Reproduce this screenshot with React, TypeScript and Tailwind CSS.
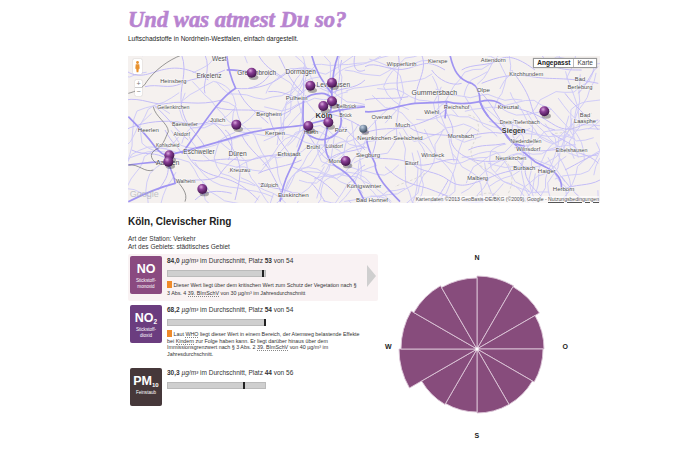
import React from "react";

const sans = "font-['Liberation_Sans',Arial,sans-serif]";

// map drawing is traced in 3x crop coordinates, so each half sits in its own scaled group
const minorLeft = [
  "M0 60 C40 90 70 70 110 60 S190 50 250 90",
  "M60 110 C100 100 130 120 170 100 S240 90 300 60",
  "M0 150 C50 140 90 170 130 160 S220 170 290 150",
  "M90 170 C130 200 150 240 190 270",
  "M0 240 C40 220 100 210 150 215 S230 230 260 210",
  "M170 15 C190 70 160 110 170 170 S210 240 240 290",
  "M240 15 C260 60 230 100 240 130",
  "M330 115 C380 120 430 110 470 80 S530 50 570 60",
  "M340 120 C360 170 400 190 430 220",
  "M270 170 C320 190 380 170 430 190 S500 170 540 155",
  "M250 210 C290 230 310 270 330 310 S350 370 330 450",
  "M200 330 C250 340 290 320 340 330 S430 300 500 320",
  "M180 300 C200 350 240 370 280 380 S350 400 400 450",
  "M280 380 C300 350 320 330 340 320",
  "M350 255 C370 300 420 330 440 370 S470 420 470 450",
  "M430 190 C440 240 470 280 500 320",
  "M400 370 C440 350 490 350 530 330",
  "M150 400 C190 380 240 400 280 380",
  "M210 450 C240 420 280 420 320 430",
  "M460 15 C480 50 490 90 535 130",
  "M400 15 C420 50 440 60 470 80",
  "M535 150 C500 140 470 120 430 125",
  "M540 240 C570 280 580 310 610 330",
  "M500 350 C550 370 600 390 640 440",
  "M650 230 C680 250 700 280 720 300",
  "M640 170 C670 180 700 160 720 170",
  "M620 130 C650 110 690 120 720 90",
  "M650 30 C640 70 650 90 630 130",
  "M690 15 C680 60 700 70 720 60",
  "M610 330 C640 300 680 310 720 290",
  "M680 380 C700 360 710 350 720 345",
  "M400 400 C440 420 480 410 520 440",
  "M560 400 C580 420 590 440 600 455",
  "M20 300 C60 320 90 300 130 330",
  "M100 420 C130 380 130 370 130 340",
  "M610 190 C650 200 680 210 715 235",
  "M300 240 C320 250 330 290 310 330",
  "M120 240 C140 280 160 290 170 310",
  "M440 60 C430 90 400 110 370 115",
  "M540 60 C530 90 540 120 535 150",
];

const majorLeft = [
  "M305 15 C310 60 320 90 332 115 C290 140 250 200 215 250 C195 275 185 295 170 310",
  "M10 200 C40 230 60 250 90 290 C110 315 130 325 150 310 C220 295 300 270 350 255 C410 235 470 235 540 225 L600 210",
  "M535 150 C535 190 530 220 540 245 C560 265 590 275 610 265 C645 255 655 220 645 185 C635 150 610 130 590 130 C565 130 545 140 535 150",
  "M560 15 C570 60 590 90 620 130 C625 170 610 210 600 270 C600 310 610 340 650 360 C690 385 700 420 720 455",
  "M540 245 C525 290 510 330 490 370 C475 400 470 430 465 455",
  "M130 335 C135 360 150 380 150 400 C110 410 50 435 10 455",
  "M10 345 C50 340 90 335 130 335",
  "M305 60 C330 58 350 62 380 68",
  "M640 15 C625 50 622 90 620 130",
  "M610 190 C650 175 690 175 720 170",
];

const minorRight = [
  "M0 50 C30 30 80 70 130 55 S190 30 240 60",
  "M100 15 C110 60 80 100 110 150",
  "M170 15 C190 60 150 100 150 160",
  "M290 60 C320 40 370 50 400 30 S470 30 510 60",
  "M350 100 C400 80 440 70 500 80 S600 80 700 100",
  "M440 60 C470 100 490 130 500 170 S530 230 570 240",
  "M530 15 C560 60 600 60 650 60",
  "M400 165 C440 170 500 180 560 220 S640 220 700 210",
  "M600 130 C630 170 660 190 700 240",
  "M0 250 C40 230 90 240 130 230 S220 200 240 180",
  "M130 230 C170 260 210 250 260 258 S360 240 410 250",
  "M240 180 C260 220 270 240 260 260 S280 320 330 330",
  "M0 320 C50 330 90 320 140 340 S230 320 280 330",
  "M140 340 C170 370 210 360 250 390 S320 400 370 385",
  "M250 390 C240 410 220 440 210 455",
  "M60 350 C100 390 130 400 170 410 S240 440 290 450",
  "M330 330 C370 340 420 330 440 326 S470 350 480 356",
  "M370 385 C400 370 440 360 480 356",
  "M490 300 C540 310 580 290 620 302 S680 320 700 340",
  "M600 360 C640 340 670 320 700 310",
  "M590 420 C630 400 670 410 705 390",
  "M350 130 C380 160 390 190 420 230",
  "M420 280 C380 290 350 280 310 300",
  "M560 250 C590 270 620 280 640 300",
  "M480 356 C480 390 500 410 530 440",
  "M590 380 C620 420 640 440 660 455",
  "M0 150 C40 140 80 150 130 140",
  "M200 60 C220 90 260 110 290 100",
  "M640 130 C670 100 680 60 700 50",
  "M30 210 C40 260 30 290 20 320",
];

const majorRight = [
  "M255 15 C265 60 280 90 320 100 C340 110 345 130 345 155 C360 200 390 220 420 250 C440 280 480 310 510 335 C560 360 590 370 590 415",
  "M0 185 C50 190 100 165 150 160 C190 158 220 158 245 155 L240 205",
  "M245 155 C280 165 320 160 345 155 C380 145 400 155 420 170",
  "M5 265 C5 290 20 320 30 340 C30 380 70 420 105 455",
  "M345 155 C350 175 360 185 370 200",
  "M420 250 C430 270 440 280 480 290",
];

const borderRoutes = [
  "M170 15 C130 30 90 60 65 95 C55 115 30 125 10 130",
  "M85 170 C90 200 130 220 130 245 C120 265 115 290 90 300 C70 315 80 330 100 345",
  "M10 345 C40 340 60 370 85 360",
  "M150 385 C170 410 190 430 180 455",
];

const dashedRight = [
  "M310 195 C340 200 350 230 330 270 S310 330 370 360",
  "M420 330 C440 350 450 390 430 430",
  "M570 250 C620 250 640 220 680 190",
  "M180 370 C150 390 110 400 90 410",
  "M330 440 C370 420 400 430 420 455",
];

// small back roads: too many to trace, a seeded walk gives the same density
const makeBackRoads = (count: number) => {
  let seed = 7919;
  const rnd = () => {
    seed = (seed * 16807) % 2147483647;
    return seed / 2147483647;
  };
  const roads: string[] = [];
  for (let i = 0; i < count; i++) {
    let x = 128 + rnd() * 472;
    let y = 56 + rnd() * 147;
    let heading = rnd() * Math.PI * 2;
    let d = `M${x.toFixed(1)} ${y.toFixed(1)}`;
    for (let s = 0; s < 5; s++) {
      heading += (rnd() - 0.5) * 1.5;
      const cx = x + Math.cos(heading) * 9;
      const cy = y + Math.sin(heading) * 9;
      heading += (rnd() - 0.5) * 1.2;
      x = cx + Math.cos(heading) * 9;
      y = cy + Math.sin(heading) * 9;
      d += `Q${cx.toFixed(1)} ${cy.toFixed(1)} ${x.toFixed(1)} ${y.toFixed(1)}`;
    }
    roads.push(d);
  }
  return roads;
};

const backRoads = makeBackRoads(140);

type MapLabel = [string, number, number, number?, boolean?];

const labelsLeft: MapLabel[] = [
  ["West", 283, 33, 27],
  ["Grevenbroich", 395, 74, 27],
  ["Dormagen", 527, 71, 27],
  ["Erkelenz", 252, 84, 27],
  ["Heinsberg", 145, 98, 24],
  ["Leverkusen", 625, 112, 27],
  ["Pulheim", 515, 150, 25],
  ["Geilenkirchen", 145, 177, 22],
  ["Bellbrück", 665, 174, 20],
  ["Bergheim", 432, 197, 25],
  ["Köln", 597, 204, 32, true],
  ["Brück", 662, 200, 20],
  ["Baesweiler", 180, 229, 22],
  ["Jülich", 278, 217, 25],
  ["Heerlen", 70, 245, 25],
  ["Porz", 648, 245, 25],
  ["Hürth", 558, 252, 25],
  ["Kerpen", 450, 256, 26],
  ["Alsdorf", 170, 259, 22],
  ["Kohlscheid", 128, 290, 20],
  ["Lülsdorf", 628, 295, 20],
  ["Brühl", 565, 297, 24],
  ["Eschweiler", 222, 311, 27],
  ["Düren", 338, 319, 28],
  ["Erftstadt", 492, 318, 26],
  ["Mondorf", 642, 338, 24],
  ["Aachen", 128, 344, 29],
  ["Kreuzau", 345, 365, 23],
  ["Walheim", 182, 398, 21],
  ["Zülpich", 433, 410, 23],
  ["Euskirchen", 505, 442, 26],
];

const labelsRight: MapLabel[] = [
  ["Kierspe", 218, 38, 24],
  ["Attendorn", 385, 37, 24],
  ["Wipperfürth", 110, 49, 24],
  ["Kirchhundem", 484, 78, 24],
  ["Bad", 645, 94, 24],
  ["Berleburg", 645, 117, 24],
  ["Olpe", 355, 126, 26],
  ["Gummersbach", 208, 134, 29],
  ["Reichshof", 275, 177, 24],
  ["Kreuztal", 430, 176, 24],
  ["Wiehl", 200, 193, 25],
  ["Bad", 660, 201, 24],
  ["Overath", 50, 206, 24],
  ["Dreis-Tiefenbach", 464, 221, 22],
  ["Laasphe", 660, 220, 24],
  ["Much", 113, 232, 25],
  ["Siegen", 446, 249, 30, true],
  ["Morsbach", 288, 263, 25],
  ["Niederdielfen", 483, 278, 22],
  ["Wilnsdorf", 490, 304, 24],
  ["Eibelshausen", 620, 306, 22],
  ["Windeck", 203, 321, 25],
  ["Neunkirchen", 438, 330, 23],
  ["Eitorf", 140, 345, 24],
  ["Burbach", 478, 361, 25],
  ["Haiger", 545, 369, 25],
  ["Malberg", 338, 391, 24],
  ["Herborn", 596, 422, 25],
];

// labels that straddle the two traced halves, in page coordinates
const labelsPage: MapLabel[] = [
  ["Neunkirchen-Seelscheid", 390, 140, 8.4],
  ["Siegburg", 368, 157, 8.4],
  ["Königswinter", 364, 188, 8.4],
  ["Bad Honnef", 372, 202, 8.4],
];

const pinsLeft = [
  [380, 68], [556, 107], [621, 98], [595, 168], [621, 154], [610, 217],
  [550, 228], [334, 224], [133, 316], [130, 335], [232, 417], [662, 333],
];

const MapLabels = ({ items }: { items: MapLabel[] }) => (
  <>
    {items.map(([text, x, y, size = 24, bold]) => (
      <text
        key={text + x}
        x={x}
        y={y}
        fontSize={size * 0.72}
        textAnchor="middle"
        fontFamily="Liberation Sans, Arial, sans-serif"
        fontWeight={bold ? 700 : 400}
        fill={bold ? "#333" : "#4d4d4d"}
        stroke="#fff"
        strokeOpacity="0.7"
        strokeWidth={size > 15 ? 3 : 1}
        paintOrder="stroke"
      >
        {text}
      </text>
    ))}
  </>
);

const Pin = ({ x, y, r = 15, fill = "url(#pinBall)" }: { x: number; y: number; r?: number; fill?: string }) => (
  <g>
    <ellipse cx={x + 6} cy={y + r - 1} rx={r - 1} ry={8} fill="#000" opacity="0.3" />
    <circle cx={x} cy={y} r={r} fill={fill} />
  </g>
);

const AirMap = () => (
  <div className="relative h-[147px] w-[472px] overflow-hidden bg-[#f5f1ef]">
    <svg viewBox="128 56 472 147" className="block h-[147px] w-[472px]">
      <defs>
        <radialGradient id="pinBall" cx="38%" cy="30%" r="75%">
          <stop offset="0" stopColor="#d9a6dc" />
          <stop offset="0.35" stopColor="#8a3f96" />
          <stop offset="1" stopColor="#3a1045" />
        </radialGradient>
        <radialGradient id="pinGrey" cx="38%" cy="30%" r="75%">
          <stop offset="0" stopColor="#c5d3e4" />
          <stop offset="0.45" stopColor="#7b8ea6" />
          <stop offset="1" stopColor="#3a4757" />
        </radialGradient>
      </defs>
      <g fill="none" stroke="#d0ccf8" strokeWidth="1">
        {backRoads.map((d) => <path key={d} d={d} />)}
      </g>
      <g transform="translate(125 50) scale(0.3333)" fill="none">
        <g stroke="#c3bcf7" strokeWidth="3">
          {minorLeft.map((d) => <path key={d} d={d} />)}
        </g>
        <g stroke="#a094f2" strokeWidth="5">
          {majorLeft.map((d) => <path key={d} d={d} />)}
        </g>
        <g stroke="#666" strokeWidth="2">
          {borderRoutes.map((d) => <path key={d} d={d} />)}
        </g>
        <MapLabels items={labelsLeft} />
        <text x="58" y="441" fontSize="27" fontFamily="Liberation Sans, Arial, sans-serif" textAnchor="middle" fill="#a9aeb5" opacity="0.7">Google</text>
      </g>
      <g transform="translate(365 50) scale(0.3333)" fill="none">
        <g stroke="#c3bcf7" strokeWidth="3">
          {minorRight.map((d) => <path key={d} d={d} />)}
        </g>
        <g stroke="#cfcdc8" strokeWidth="2" strokeDasharray="8 6">
          {dashedRight.map((d) => <path key={d} d={d} />)}
        </g>
        <g stroke="#a094f2" strokeWidth="5">
          {majorRight.map((d) => <path key={d} d={d} />)}
        </g>
        <MapLabels items={labelsRight} />
      </g>
      <MapLabels items={labelsPage} />
      <g transform="translate(125 50) scale(0.3333)">
        {pinsLeft.map(([x, y]) => <Pin key={`${x}-${y}`} x={x} y={y} />)}
        <Pin x={715} y={236} r={12} fill="url(#pinGrey)" />
      </g>
      <g transform="translate(365 50) scale(0.3333)">
        <Pin x={538} y={184} />
      </g>
    </svg>

    {/* pegman + zoom */}
    <div className="absolute left-[5px] top-[3px] h-[15px] w-[9px] rounded-[1px] bg-white shadow-[0_0_1px_#888]">
      <svg viewBox="0 0 10 17" className="h-[15px] w-[9px]">
        <circle cx="5" cy="4" r="1.6" fill="#e8912e" />
        <path d="M3 6h4l.5 5H6.5L6 15H4l-.5-4h-1z" fill="#e8912e" />
      </svg>
    </div>
    <div className="absolute left-[7px] top-[24px] flex h-[16px] w-[7px] flex-col rounded-[1px] bg-white text-center text-[7px] leading-[7px] text-[#777] shadow-[0_0_1px_#888]">
      <span className="h-[8px] border-b border-[#ccc]">+</span>
      <span>−</span>
    </div>

    {/* map type */}
    <div className={`absolute right-[3px] top-[2px] flex h-[10px] border border-[#999] bg-white text-[6.5px] leading-[8px] shadow-[0_0_1px_#aaa] ${sans}`}>
      <span className="border-r border-[#bbb] px-[3px] font-bold text-[#222]">Angepasst</span>
      <span className="px-[3px] text-[#444]">Karte</span>
    </div>

    <div className={`absolute bottom-[0.5px] right-[1px] bg-white/60 text-[5.1px] leading-[7px] text-[#555] ${sans}`}>
      Kartendaten ©2013 GeoBasis-DE/BKG (©2009), Google - <span className="underline">Nutzungsbedingungen</span>
    </div>
  </div>
);

const Abbr = ({ children }: { children: React.ReactNode }) => (
  <span className="border-b border-dotted border-[#888]">{children}</span>
);

const Flag = () => <span className="inline-block h-[7px] w-[5px] bg-[#ef8a2a] align-[-1px]" />;

interface StationRowProps {
  badge: React.ReactNode;
  name: React.ReactNode;
  color: string;
  value: string;
  rank: number;
  total: number;
  marker: number;
  note?: React.ReactNode;
  active?: boolean;
  height: string;
}

const StationRow = ({ badge, name, color, value, rank, total, marker, note, active, height }: StationRowProps) => (
  <div className={`relative flex gap-[5px] rounded-[2px] p-[2px] ${height} ${active ? "bg-[#f9f2f3]" : ""}`}>
    <div className={`flex h-[38px] w-[32px] shrink-0 flex-col items-center rounded-[2px] pt-[7px] text-white ${color}`}>
      <div className="text-[12.5px] font-bold leading-[13px]">{badge}</div>
      <div className="mt-[2px] text-center text-[4.6px] leading-[6px]">{name}</div>
    </div>
    <div className="flex-1">
      <div className="text-[6.5px] leading-[9px] text-[#333]">
        <b>{value}</b> <span className="italic">µg/m³</span> im Durchschnitt, Platz <b>{rank}</b> von {total}
      </div>
      <div className="relative mt-[5px] h-[7px] w-[99px] border border-[#bbb] bg-[#cfcfcf]">
        <div className="absolute top-[-1px] h-[7px] w-[1.5px] bg-[#222]" style={{ left: marker }} />
      </div>
      {note && <div className="mt-[4px] text-[5.35px] text-[#333]">{note}</div>}
    </div>
    {active && (
      <div className="absolute right-[2px] top-[11px] h-0 w-0 border-y-[11px] border-l-[9px] border-y-transparent border-l-[#cfcfcf]" />
    )}
  </div>
);

const CX = 100;
const CY = 100;
const radii = [73, 72, 67, 66, 64, 64, 63, 64, 78, 76, 73, 71];

const wedgePath = (i: number, r: number) => {
  const a0 = ((i * 30 - 90) * Math.PI) / 180;
  const a1 = (((i + 1) * 30 - 90) * Math.PI) / 180;
  return `M${CX} ${CY}L${CX + r * Math.cos(a0)} ${CY + r * Math.sin(a0)}A${r} ${r} 0 0 1 ${CX + r * Math.cos(a1)} ${CY + r * Math.sin(a1)}Z`;
};

const WindRose = () => (
  <div className="relative h-[200px] w-[200px]">
    <svg viewBox="0 0 200 200" className="block h-[200px] w-[200px]">
      {radii.map((r, i) => (
        <path key={i} d={wedgePath(i, r)} fill="#874c7c" stroke="#dcc6d8" strokeWidth="0.9" strokeLinejoin="round" />
      ))}
      <circle cx={CX} cy={CY} r="2" fill="#fff" stroke="#dcc6d8" strokeWidth="0.8" />
    </svg>
    <span className="absolute left-[97.5px] top-[5px] text-[7px] font-bold leading-[8px] text-[#222]">N</span>
    <span className="absolute left-[185.5px] top-[94px] text-[7px] font-bold leading-[8px] text-[#222]">O</span>
    <span className="absolute left-[97.5px] top-[183px] text-[7px] font-bold leading-[8px] text-[#222]">S</span>
    <span className="absolute left-[8px] top-[94px] text-[7px] font-bold leading-[8px] text-[#222]">W</span>
  </div>
);

export default function App() {
  return (
    <div className={`h-[450px] w-[700px] overflow-hidden bg-white pl-[128px] ${sans}`}>
      <h1 className="h-[33px] pt-[8px] font-['Liberation_Serif',serif] text-[22.6px] font-bold italic leading-[24px] text-[#b884d0] [-webkit-text-stroke:0.6px_#b884d0]">
        Und was atmest Du so?
      </h1>
      <p className="h-[23px] pt-[1px] text-[6.5px] leading-[9px] text-[#222]">
        Luftschadstoffe in Nordrhein-Westfalen, einfach dargestellt.
      </p>
      <AirMap />
      <h2 className="mt-[12px] text-[10px] font-bold leading-[14px] text-[#222]">Köln, Clevischer Ring</h2>
      <div className="mt-[6px] text-[6.5px] leading-[8px] text-[#333]">
        <div>Art der Station: Verkehr</div>
        <div>Art des Gebiets: städtisches Gebiet</div>
      </div>
      <div className="mt-[3px] flex">
        <div className="w-[250px]">
          <StationRow
            active
            height="h-[47px]"
            badge="NO"
            name={<>Stickstoff-<br />monoxid</>}
            color="bg-[#8a4a80]"
            value="84,0"
            rank={53}
            total={54}
            marker={94}
            note={
              <div className="w-[190px] leading-[8px]">
                <Flag /> Dieser Wert liegt über dem kritischen Wert zum Schutz der Vegetation nach § 3 Abs. 4 <Abbr>39. BImSchV</Abbr> von 30 µg/m³ im Jahresdurchschnitt
              </div>
            }
          />
          <div className="h-[2px]" />
          <StationRow
            height="h-[63px]"
            badge={<>NO<sub className="text-[6.5px] leading-none">2</sub></>}
            name={<>Stickstoff-<br />dioxid</>}
            color="bg-[#6b3d7f]"
            value="68,2"
            rank={54}
            total={54}
            marker={96}
            note={
              <div className="mt-[2px] w-[196px] leading-[6.7px]">
                <Flag /> Laut <Abbr>WHO</Abbr> liegt dieser Wert in einem Bereich, der Atemweg belastende Effekte bei <Abbr>Kindern</Abbr> zur Folge haben kann. Er liegt darüber hinaus über dem Immissionsgrenzwert nach § 3 Abs. 2 <Abbr>39. BImSchV</Abbr> von 40 µg/m³ im Jahresdurchschnitt.
              </div>
            }
          />
          <StationRow
            height="h-[44px]"
            badge={<>PM<sub className="text-[6px] leading-none">10</sub></>}
            name="Feinstaub"
            color="bg-[#46383a]"
            value="30,3"
            rank={44}
            total={56}
            marker={75}
          />
        </div>
        <div className="ml-[-1px] mt-[-5px]">
          <WindRose />
        </div>
      </div>
    </div>
  );
}
